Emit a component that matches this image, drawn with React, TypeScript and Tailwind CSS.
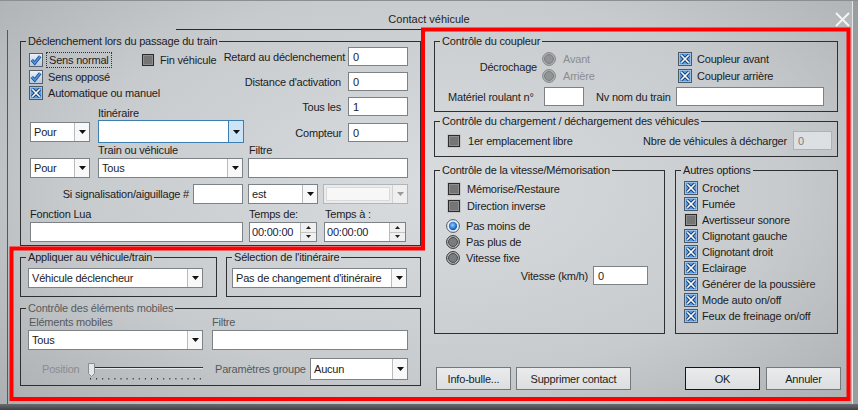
import React from "react";

type Kind = "tick" | "x" | "off";

function CheckIcon({ kind }: { kind: Kind }) {
  if (kind === "tick")
    return (
      <svg width="14" height="14" viewBox="0 0 14 14" className="shrink-0">
        <defs>
          <linearGradient id="gtick" x1="0" y1="0" x2="0" y2="1">
            <stop offset="0" stopColor="#eef3f9" />
            <stop offset="1" stopColor="#b4c8de" />
          </linearGradient>
        </defs>
        <rect x="0.5" y="0.5" width="13" height="13" fill="url(#gtick)" stroke="#56616c" />
        <path d="M2.8 7 L5.7 10 L11.2 3.2" fill="none" stroke="#1b4b86" strokeWidth="3.2" />
        <path d="M2.8 7 L5.7 10 L11.2 3.2" fill="none" stroke="#4f97e2" strokeWidth="1.6" />
      </svg>
    );
  if (kind === "x")
    return (
      <svg width="14" height="14" viewBox="0 0 14 14" className="shrink-0">
        <rect x="0.5" y="0.5" width="13" height="13" fill="#cfe0f2" stroke="#4d5863" />
        <rect x="1.5" y="1.5" width="11" height="11" fill="#5b9be0" />
        <path d="M3.3 3.3 L10.7 10.7 M10.7 3.3 L3.3 10.7" stroke="#163c6e" strokeWidth="3.4" />
        <path d="M3.3 3.3 L10.7 10.7 M10.7 3.3 L3.3 10.7" stroke="#ffffff" strokeWidth="1.6" />
      </svg>
    );
  return (
    <svg width="14" height="14" viewBox="0 0 14 14" className="shrink-0">
      <rect x="0.5" y="0.5" width="13" height="13" fill="none" stroke="#c4c7ca" />
      <rect x="1.5" y="1.5" width="11" height="11" fill="#757575" stroke="#2c2c2c" />
      <rect x="2.5" y="2.5" width="9" height="9" fill="none" stroke="#8e8e8e" />
    </svg>
  );
}

function Radio({ on = false, disabled = false }: { on?: boolean; disabled?: boolean }) {
  if (on)
    return (
      <svg width="14" height="14" viewBox="0 0 14 14" className="shrink-0">
        <defs>
          <radialGradient id="gradio" cx="0.45" cy="0.4" r="0.6">
            <stop offset="0" stopColor="#9fd0ff" />
            <stop offset="0.6" stopColor="#2f7fdc" />
            <stop offset="1" stopColor="#1456a8" />
          </radialGradient>
        </defs>
        <circle cx="7" cy="7" r="6.4" fill="#eef2f6" stroke="#4b5661" />
        <circle cx="7" cy="7" r="4.2" fill="url(#gradio)" />
      </svg>
    );
  return (
    <svg width="14" height="14" viewBox="0 0 14 14" className="shrink-0">
      <circle cx="7" cy="7" r="6.4" fill={disabled ? "#b3b5b7" : "#bfc1c3"} stroke={disabled ? "#818385" : "#2f3133"} />
      <circle cx="7" cy="7" r="4.5" fill={disabled ? "#929496" : "#7a7c7e"} stroke={disabled ? "#7b7d7f" : "#4a4c4e"} />
    </svg>
  );
}

function Arrow({ color = "#111" }: { color?: string }) {
  return (
    <svg width="7" height="4" viewBox="0 0 7 4">
      <polygon points="0,0 7,0 3.5,4" fill={color} />
    </svg>
  );
}

function Combo({
  className = "",
  value = "",
  focus = false,
  disabled = false,
}: {
  className?: string;
  value?: string;
  focus?: boolean;
  disabled?: boolean;
}) {
  const border = focus ? "border-[#3c7fb1]" : disabled ? "border-[#b2b5b8]" : "border-[#7d8287]";
  return (
    <div className={`flex shrink-0 border ${border} ${disabled ? "bg-[#ececec]" : "bg-white"} ${className}`}>
      <div
        className={`flex-1 flex items-center pl-[3px] whitespace-nowrap overflow-hidden ${
          disabled ? "m-[2px] bg-[#f7f7f7] border border-[#dadada]" : ""
        }`}
      >
        {value}
      </div>
      <div
        className={`w-[15px] flex items-center justify-center border-l ${
          focus
            ? "border-[#3c7fb1] bg-[#cde4f7]"
            : disabled
            ? "border-[#d2d2d2] bg-[#efefef]"
            : "border-[#b9bcbf] bg-[#f8f8f8]"
        }`}
      >
        <Arrow color={disabled ? "#9a9a9a" : "#111"} />
      </div>
    </div>
  );
}

function Field({ className = "", value = "", disabled = false }: { className?: string; value?: string; disabled?: boolean }) {
  return (
    <div
      className={`flex shrink-0 items-center pl-[4px] border ${
        disabled ? "border-[#aeb2b6] bg-[#dde0e3] text-[#7b7e81]" : "border-[#7d8287] bg-white"
      } ${className}`}
    >
      {value}
    </div>
  );
}

function Spinner({ className = "" }: { className?: string }) {
  return (
    <div className={`flex shrink-0 border border-[#7d8287] bg-white ${className}`}>
      <div className="flex-1 flex items-center pl-[2px] text-[#18203a]">00:00:00</div>
      <div className="w-[16px] flex flex-col border-l border-[#b9bcbf] bg-[#f0f0f0]">
        <div className="flex-1 flex items-center justify-center border-b border-[#c4c4c4]">
          <svg width="5" height="3" viewBox="0 0 5 3">
            <polygon points="0,3 5,3 2.5,0" fill="#222" />
          </svg>
        </div>
        <div className="flex-1 flex items-center justify-center">
          <svg width="5" height="3" viewBox="0 0 5 3">
            <polygon points="0,0 5,0 2.5,3" fill="#222" />
          </svg>
        </div>
      </div>
    </div>
  );
}

function Group({
  title,
  className = "",
  inner = "",
  dim = false,
  children,
}: {
  title: string;
  className?: string;
  inner?: string;
  dim?: boolean;
  children: React.ReactNode;
}) {
  return (
    <fieldset className={`border border-[#2d2f31] shrink-0 min-w-0 ${className}`}>
      <legend className={`ml-[5px] px-[2px] leading-[14px] ${dim ? "text-[#585b5e]" : ""}`}>{title}</legend>
      <div className={inner}>{children}</div>
    </fieldset>
  );
}

function Btn({ label, className = "", def = false }: { label: string; className?: string; def?: boolean }) {
  return (
    <div
      className={`h-[23px] shrink-0 flex items-center justify-center border ${
        def ? "border-[#151515]" : "border-[#75787b]"
      } bg-[linear-gradient(#e9ebec,#dcdee0)] ${className}`}
    >
      {label}
    </div>
  );
}

function Slider() {
  const ticks = [];
  for (let i = 0; i < 19; i++) ticks.push(2 + i * 6.1);
  return (
    <svg width="115" height="22" viewBox="0 0 115 22" className="shrink-0">
      <line x1="4" y1="9.5" x2="115" y2="9.5" stroke="#2e3032" />
      <line x1="4" y1="10.5" x2="115" y2="10.5" stroke="#e6e8ea" />
      {ticks.map((x, i) => (
        <rect key={i} x={x} y="20" width="1" height="1.5" fill="#2e3032" />
      ))}
      <path d="M0.5 5.5 H6.5 V15.5 L3.5 18.5 L0.5 15.5 Z" fill="#e4e6e8" stroke="#8a8d90" />
    </svg>
  );
}

const autres: [Kind, string][] = [
  ["x", "Crochet"],
  ["x", "Fumée"],
  ["off", "Avertisseur sonore"],
  ["x", "Clignotant gauche"],
  ["x", "Clignotant droit"],
  ["x", "Eclairage"],
  ["x", "Générer de la poussière"],
  ["x", "Mode auto on/off"],
  ["x", "Feux de freinage on/off"],
];

export default function App() {
  return (
    <div
      className={`relative w-[858px] h-[410px] overflow-hidden flex flex-col font-['Liberation_Sans',Arial,sans-serif] text-[11px] tracking-[-0.2px] leading-[14px] text-[#1c1c1c] bg-[radial-gradient(ellipse_75%_85%_at_50%_45%,#d9dcde_0%,#c8cbce_55%,#a6a9ac_100%)] shadow-[inset_0_1px_0_#8c8f92,inset_-5px_0_0_#9a9da0,inset_-6px_0_0_#e4e6e8]`}
    >
      {/* title bar */}
      <div className="h-[30px] shrink-0 flex flex-col">
        <div className="h-[29px] flex justify-center pt-[12px] tracking-normal text-[#1e1e1e]">Contact véhicule</div>
        <div className="h-px ml-[176px] w-[247px] bg-[#2a2a2a]" />
      </div>
      <svg className="absolute left-[835px] top-[12px]" width="15" height="15" viewBox="0 0 15 15">
        <path d="M1 1 L14 14 M14 1 L1 14" stroke="#f4f4f4" strokeWidth="2" />
      </svg>

      {/* client */}
      <div className="flex-1 flex ml-[7px] border-l border-[#55585b] pl-[12px]">
        {/* left column */}
        <div className="w-[401px] shrink-0 flex flex-col">
          <Group
            title="Déclenchement lors du passage du train"
            className="mt-[4px] w-[401px]"
            inner="pl-[8px] pr-[12px] pb-[3px]"
          >
            <div className="flex">
              <div className="w-[216px] shrink-0 flex flex-col">
                <div className="mt-[4px] h-[16px] flex items-center">
                  <div className="w-[112px] flex items-center">
                    <CheckIcon kind="tick" />
                    <span className="ml-[3px] px-[2px] border border-dotted border-[#333]">Sens normal</span>
                  </div>
                  <CheckIcon kind="off" />
                  <span className="ml-[5px]">Fin véhicule</span>
                </div>
                <div className="h-[17px] flex items-center">
                  <CheckIcon kind="tick" />
                  <span className="ml-[5px]">Sens opposé</span>
                </div>
                <div className="h-[16px] flex items-center">
                  <CheckIcon kind="x" />
                  <span className="ml-[5px]">Automatique ou manuel</span>
                </div>
                <div className="mt-[5px] h-[14px] pl-[69px]">Itinéraire</div>
                <div className="h-[23px] flex items-center">
                  <Combo className="ml-[1px] w-[60px] h-[20px]" value="Pour" />
                  <Combo className="ml-[8px] w-[146px] h-[23px]" focus />
                </div>
              </div>
              <div className="flex-1 min-w-0 flex flex-col -mt-[1px]">
                <div className="h-[19px] flex justify-end items-center">
                  <span className="whitespace-nowrap mr-[3px]">Retard au déclenchement</span>
                  <Field className="w-[60px] h-[19px]" value="0" />
                </div>
                <div className="mt-[6px] h-[19px] flex justify-end items-center">
                  <span className="whitespace-nowrap mr-[7px]">Distance d'activation</span>
                  <Field className="w-[60px] h-[19px]" value="0" />
                </div>
                <div className="mt-[6px] h-[19px] flex justify-end items-center">
                  <span className="whitespace-nowrap mr-[7px]">Tous les</span>
                  <Field className="w-[60px] h-[19px]" value="1" />
                </div>
                <div className="mt-[7px] h-[19px] flex justify-end items-center">
                  <span className="whitespace-nowrap mr-[6px]">Compteur</span>
                  <Field className="w-[60px] h-[19px]" value="0" />
                </div>
              </div>
            </div>
            <div className="h-[14px] flex">
              <span className="ml-[69px] w-[151px]">Train ou véhicule</span>
              <span>Filtre</span>
            </div>
            <div className="mt-[1px] h-[20px] flex">
              <Combo className="ml-[1px] w-[60px] h-[20px]" value="Pour" />
              <Combo className="ml-[8px] w-[145px] h-[20px]" value="Tous" />
              <Field className="ml-[5px] w-[160px] h-[20px]" />
            </div>
            <div className="mt-[6px] h-[20px] flex items-center">
              <span className="w-[160px] text-right whitespace-nowrap">Si signalisation/aiguillage #</span>
              <Field className="ml-[4px] w-[50px] h-[20px]" />
              <Combo className="ml-[5px] w-[70px] h-[20px]" value="est" />
              <Combo className="ml-[5px] w-[85px] h-[20px]" disabled />
            </div>
            <div className="mt-[3px] h-[14px] flex">
              <span className="ml-[1px] w-[219px]">Fonction Lua</span>
              <span className="w-[76px]">Temps de:</span>
              <span>Temps à :</span>
            </div>
            <div className="mt-[1px] h-[20px] flex">
              <Field className="ml-[1px] w-[213px] h-[20px]" />
              <Spinner className="ml-[6px] w-[68px] h-[20px]" />
              <Spinner className="ml-[7px] w-[82px] h-[20px]" />
            </div>
          </Group>

          <div className="mt-[4px] flex">
            <Group title="Appliquer au véhicule/train" className="w-[197px]" inner="pl-[7px] pb-[8px]">
              <Combo className="mt-[4px] w-[175px] h-[20px]" value="Véhicule déclencheur" />
            </Group>
            <Group title="Sélection de l'itinéraire" className="ml-[9px] w-[195px]" inner="pl-[5px] pb-[8px]">
              <Combo className="mt-[4px] w-[175px] h-[20px]" value="Pas de changement d'itinéraire" />
            </Group>
          </div>

          <Group title="Contrôle des éléments mobiles" dim className="mt-[4px] w-[401px]" inner="pl-[8px] pb-[5px]">
            <div className="h-[14px] flex text-[#56595c]">
              <span className="w-[183px]">Eléments mobiles</span>
              <span>Filtre</span>
            </div>
            <div className="mt-[1px] h-[20px] flex">
              <Combo className="-ml-[1px] w-[175px] h-[20px]" value="Tous" />
              <Field className="ml-[9px] w-[196px] h-[20px]" />
            </div>
            <div className="mt-[8px] h-[22px] flex items-center">
              <span className="ml-[13px] w-[46px] text-[#8a8d90]">Position</span>
              <Slider />
              <span className="ml-[12px] w-[95px] whitespace-nowrap text-[#56595c]">Paramètres groupe</span>
              <Combo className="w-[98px] h-[22px]" value="Aucun" />
            </div>
          </Group>
        </div>

        {/* right column */}
        <div className="ml-[13px] w-[404px] shrink-0 flex flex-col">
          <Group title="Contrôle du coupleur" className="mt-[4px] w-[404px]" inner="pb-[5px]">
            <div className="mt-[2px] flex">
              <div className="w-[102px] flex items-center justify-end">Décrochage</div>
              <div className="ml-[5px] w-[136px] flex flex-col text-[#8a8d90]">
                <div className="h-[17px] flex items-center">
                  <Radio disabled />
                  <span className="ml-[7px]">Avant</span>
                </div>
                <div className="h-[17px] flex items-center">
                  <Radio disabled />
                  <span className="ml-[7px]">Arrière</span>
                </div>
              </div>
              <div className="flex flex-col">
                <div className="h-[17px] flex items-center">
                  <CheckIcon kind="x" />
                  <span className="ml-[5px]">Coupleur avant</span>
                </div>
                <div className="h-[17px] flex items-center">
                  <CheckIcon kind="x" />
                  <span className="ml-[5px]">Coupleur arrière</span>
                </div>
              </div>
            </div>
            <div className="mt-[3px] h-[19px] flex items-center">
              <span className="ml-[13px] w-[96px] whitespace-nowrap">Matériel roulant n°</span>
              <Field className="w-[40px] h-[19px]" />
              <span className="ml-[12px] w-[80px] whitespace-nowrap">Nv nom du train</span>
              <Field className="w-[148px] h-[19px]" />
            </div>
          </Group>

          <Group
            title="Contrôle du chargement / déchargement des véhicules"
            className="mt-[2px] w-[404px]"
            inner="pb-[6px]"
          >
            <div className="mt-[3px] h-[19px] flex items-center">
              <div className="ml-[12px]">
                <CheckIcon kind="off" />
              </div>
              <span className="ml-[7px]">1er emplacement libre</span>
              <div className="flex-1" />
              <span className="whitespace-nowrap">Nbre de véhicules à décharger</span>
              <Field className="ml-[6px] mr-[5px] w-[39px] h-[19px]" value="0" disabled />
            </div>
          </Group>

          <div className="mt-[6px] flex">
            <Group title="Contrôle de la vitesse/Mémorisation" className="w-[231px] h-[171px]">
              <div className="mt-[4px] h-[16px] flex items-center">
                <div className="ml-[12px]">
                  <CheckIcon kind="off" />
                </div>
                <span className="ml-[6px]">Mémorise/Restaure</span>
              </div>
              <div className="h-[17px] flex items-center">
                <div className="ml-[12px]">
                  <CheckIcon kind="off" />
                </div>
                <span className="ml-[6px]">Direction inverse</span>
              </div>
              <div className="mt-[4px] h-[16px] flex items-center">
                <div className="ml-[11px]">
                  <Radio on />
                </div>
                <span className="ml-[6px]">Pas moins de</span>
              </div>
              <div className="h-[16px] flex items-center">
                <div className="ml-[11px]">
                  <Radio />
                </div>
                <span className="ml-[6px]">Pas plus de</span>
              </div>
              <div className="h-[16px] flex items-center">
                <div className="ml-[11px]">
                  <Radio />
                </div>
                <span className="ml-[6px]">Vitesse fixe</span>
              </div>
              <div className="h-[19px] flex items-center justify-end pr-[16px]">
                <span className="mr-[5px] whitespace-nowrap">Vitesse (km/h)</span>
                <Field className="w-[55px] h-[19px]" value="0" />
              </div>
            </Group>
            <Group title="Autres options" className="ml-[10px] w-[163px] h-[171px]">
              <div className="mt-[3px] flex flex-col">
                {autres.map(([k, l]) => (
                  <div key={l} className="h-[16px] flex items-center">
                    <div className="ml-[8px]">
                      <CheckIcon kind={k} />
                    </div>
                    <span className="ml-[4px] whitespace-nowrap">{l}</span>
                  </div>
                ))}
              </div>
            </Group>
          </div>

          <div className="mt-[33px] flex">
            <Btn label="Info-bulle..." className="ml-[2px] w-[75px]" />
            <Btn label="Supprimer contact" className="ml-[5px] w-[115px]" />
            <Btn label="OK" def className="ml-[54px] w-[75px]" />
            <Btn label="Annuler" className="ml-[6px] w-[75px]" />
          </div>
        </div>
      </div>
      <div className="h-[6px] shrink-0 bg-[linear-gradient(#6a6d70,#3f4244)]" />

      {/* red annotation overlay */}
      <svg className="absolute inset-0 pointer-events-none" width="858" height="410" viewBox="0 0 858 410">
        <polygon
          points="423,29.5 848.5,29.5 848.5,399 11.5,399 11.5,248.5 423,248.5"
          fill="none"
          stroke="#ff0000"
          strokeWidth="4"
        />
      </svg>
    </div>
  );
}
